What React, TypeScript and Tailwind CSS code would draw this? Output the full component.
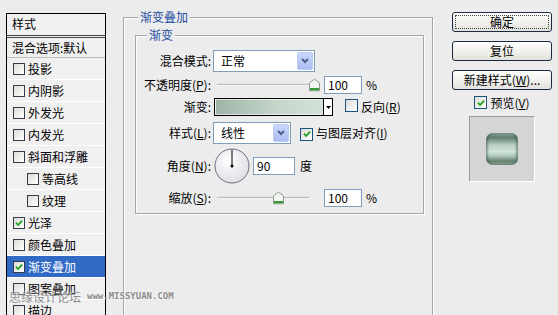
import React from "react";

const styles = [
  { label: "投影", on: false },
  { label: "内阴影", on: false },
  { label: "外发光", on: false },
  { label: "内发光", on: false },
  { label: "斜面和浮雕", on: false },
  { label: "等高线", on: false, sub: true },
  { label: "纹理", on: false, sub: true },
  { label: "光泽", on: true },
  { label: "颜色叠加", on: false },
  { label: "渐变叠加", on: true, active: true },
  { label: "图案叠加", on: false },
  { label: "描边", on: false },
];

function Check({ on, small }: { on?: boolean; small?: boolean }) {
  return (
    <span
      className={`inline-flex shrink-0 items-center justify-center border bg-gradient-to-br from-[#dcdcd7] to-white ${
        small ? "h-[12px] w-[12px] border-[#333c48]" : "h-[13px] w-[13px] border-[#1c5180]"
      }`}
    >
      {on && (
        <svg viewBox="0 0 9 9" className="h-[8px] w-[8px]">
          <path d="M1 4.2 L3.5 6.8 L8 1.8" stroke="#21a121" strokeWidth="2" fill="none" />
        </svg>
      )}
    </span>
  );
}

function Combo({ text, wide }: { text: string; wide?: boolean }) {
  return (
    <div className={`flex h-[22px] border border-[#7f9db9] bg-white ${wide ? "w-[102px]" : "w-[78px]"}`}>
      <span className="flex-1 pl-[7px] leading-[20px]">{text}</span>
      <span className="m-[1px] flex w-[16px] items-center justify-center rounded-[2px] border border-[#bccdf5] bg-gradient-to-b from-[#cbd9fd] to-[#abbdf2]">
        <svg viewBox="0 0 8 6" className="h-[6px] w-[8px]">
          <path d="M1 1 L4 4 L7 1" stroke="#4d6185" strokeWidth="2" fill="none" />
        </svg>
      </span>
    </div>
  );
}

function Slider({ pos, wide }: { pos: "end" | "mid"; wide?: boolean }) {
  return (
    <div className={`relative h-full ${wide ? "w-[100px]" : "w-[96px]"}`}>
      <div className="absolute left-0 right-[4px] top-1/2 h-[3px] -translate-y-1/2 rounded-full border-t border-[#9a9a9a] border-b border-b-white bg-[#e4e4e4]" />
      <svg
        viewBox="0 0 11 13"
        className={`absolute top-1/2 h-[13px] w-[11px] -translate-y-1/2 ${pos === "end" ? "left-[92px]" : "left-[56px]"}`}
      >
        <path d="M0.5 4.5 L5.5 0.5 L10.5 4.5 L10.5 12.5 L0.5 12.5 Z" fill="#f4f6f2" stroke="#8e9a90" />
        <rect x="1" y="9.5" width="9" height="2.5" fill="#3c9a3c" />
      </svg>
    </div>
  );
}

function Field({ value, w }: { value: string; w: string }) {
  return <div className={`h-[18px] border border-[#7f9db9] bg-white pl-[3px] leading-[16px] ${w}`}>{value}</div>;
}

function Label({ children }: { children: React.ReactNode }) {
  return <span className="w-[75px] shrink-0 text-right">{children}</span>;
}

function Button({ children, primary }: { children: React.ReactNode; primary?: boolean }) {
  return (
    <div className="h-[20px] w-full rounded-[3px] border border-[#1b2a40] bg-gradient-to-b from-white to-[#e2e2dc] p-[2px]">
      <div
        className={`flex h-full items-center justify-center leading-none ${
          primary ? "border border-dotted border-[#444]" : ""
        }`}
      >
        {children}
      </div>
    </div>
  );
}

export default function App() {
  return (
    <div className="relative flex h-[315px] w-[558px] overflow-hidden bg-[#ececec] font-['Noto_Sans_CJK_SC','Noto_Sans',sans-serif] text-[12px] text-black">
      {/* style list */}
      <div className="ml-[6px] mt-[13px] h-[320px] w-[100px] shrink-0 border border-black bg-[#f0f0f0]">
        <div className="flex h-[24px] items-center border-b-[3px] border-double border-[#444] pl-[5px] pb-[1px]">
          样式
        </div>
        <div className="flex h-[20px] items-center border-b border-[#bdbdbd] pl-[5px]">混合选项:默认</div>
        {styles.map((s) => (
          <div
            key={s.label}
            className={`flex h-[22px] items-center gap-[3px] border-b border-white ${s.sub ? "pl-[20px]" : "pl-[6px]"} ${
              s.active ? "bg-[#316ac5] text-white" : ""
            }`}
          >
            <Check on={s.on} small />
            <span>{s.label}</span>
          </div>
        ))}
      </div>

      {/* gradient overlay group */}
      <div className="relative ml-[17px] mt-[17px] h-[320px] w-[310px] shrink-0 border border-[#a6a6a6] shadow-[inset_1px_1px_0_#fff,1px_1px_0_#fff]">
        <span className="absolute -top-[9px] left-[14px] bg-[#ececec] px-[2px] leading-[16px] text-[#1f4ea0]">渐变叠加</span>

        <div className="relative ml-[11px] mt-[17px] h-[179px] w-[289px] border border-[#a6a6a6] shadow-[inset_1px_1px_0_#fff,1px_1px_0_#fff]">
          <span className="absolute -top-[9px] left-[11px] bg-[#ececec] px-[2px] leading-[16px] text-[#1f4ea0]">渐变</span>

          <div className="flex flex-col pt-[14px]">
            <div className="flex h-[22px] items-center">
              <Label>混合模式:</Label>
              <div className="ml-[2px]">
                <Combo text="正常" wide />
              </div>
            </div>

            <div className="mt-[3px] flex h-[20px] items-center">
              <Label>
                不透明度(<u>P</u>):
              </Label>
              <div className="ml-[6px] h-full">
                <Slider pos="end" wide />
              </div>
              <div className="ml-[7px]">
                <Field value="100" w="w-[38px]" />
              </div>
              <span className="ml-[4px]">%</span>
            </div>

            <div className="mt-[3px] flex h-[18px] items-center">
              <Label>渐变:</Label>
              <div className="ml-[3px] flex h-[18px] w-[119px] border border-black">
                <div className="flex-1 border border-white/60 bg-[linear-gradient(to_right,#9db4a6,#c4d5ca_55%,#d3e2d8)]" />
                <div className="flex w-[9px] items-center justify-center border-l border-black bg-white">
                  <svg viewBox="0 0 5 3" className="h-[3px] w-[5px]">
                    <path d="M0 0 L5 0 L2.5 3 Z" fill="#000" />
                  </svg>
                </div>
              </div>
              <span className="ml-[12px]">
                <Check />
              </span>
              <span className="ml-[3px]">
                反向(<u>R</u>)
              </span>
            </div>

            <div className="mt-[6px] flex h-[22px] items-center">
              <Label>
                样式(<u>L</u>):
              </Label>
              <div className="ml-[2px]">
                <Combo text="线性" />
              </div>
              <span className="ml-[9px]">
                <Check on />
              </span>
              <span className="ml-[3px]">
                与图层对齐(<u>I</u>)
              </span>
            </div>

            <div className="mt-[4px] flex h-[36px] items-center">
              <Label>
                角度(<u>N</u>):
              </Label>
              <svg viewBox="0 0 36 36" className="ml-[3px] h-[36px] w-[36px]">
                <defs>
                  <radialGradient id="dial" cx="40%" cy="35%" r="70%">
                    <stop offset="0%" stopColor="#ffffff" />
                    <stop offset="100%" stopColor="#dcdce4" />
                  </radialGradient>
                </defs>
                <circle cx="18" cy="18" r="17" fill="url(#dial)" stroke="#6f7080" strokeWidth="1" />
                <line x1="18" y1="18" x2="18" y2="1.5" stroke="#000" strokeWidth="1" />
                <circle cx="18" cy="18" r="1.5" fill="#000" />
              </svg>
              <div className="ml-[3px]">
                <Field value="90" w="w-[42px]" />
              </div>
              <span className="ml-[5px]">度</span>
            </div>

            <div className="mt-[5px] flex h-[18px] items-center">
              <Label>
                缩放(<u>S</u>):
              </Label>
              <div className="ml-[6px] h-full">
                <Slider pos="mid" />
              </div>
              <div className="ml-[11px]">
                <Field value="100" w="w-[38px]" />
              </div>
              <span className="ml-[4px]">%</span>
            </div>
          </div>
        </div>
      </div>

      {/* buttons */}
      <div className="ml-[19px] mt-[12px] flex w-[100px] shrink-0 flex-col items-center">
        <Button primary>确定</Button>
        <div className="mt-[9px] w-full">
          <Button>复位</Button>
        </div>
        <div className="mt-[9px] w-full">
          <Button>
            新建样式(<u>W</u>)...
          </Button>
        </div>
        <div className="mt-[6px] flex h-[13px] items-center gap-[3px]">
          <Check on />
          <span>
            预览(<u>V</u>)
          </span>
        </div>
        <div className="mt-[7px] flex h-[66px] w-[66px] items-center justify-center border border-[#9c9c9c] border-b-white border-r-white bg-[#d5d5d5]">
          <div className="h-[32px] w-[32px] rounded-[7px] bg-[linear-gradient(to_bottom,#8fa79a_0%,#5f7d6f_14%,#b9d0c4_38%,#d2e4da_58%,#b2c9bd_72%,#61806f_88%,#8ea798_100%)] shadow-[inset_2px_0_2px_rgba(60,90,75,0.5),inset_-2px_0_2px_rgba(60,90,75,0.5)]" />
        </div>
      </div>

      {/* watermark */}
      <div className="absolute left-[9px] top-[288px] flex items-center text-[#8d8d8d] [text-shadow:0_0_2px_#fff]">
        <span className="text-[12px]">思缘设计论坛</span>
        <span className="ml-[6px] font-['DejaVu_Sans_Mono',monospace] text-[9px] font-bold">www.MISSYUAN.COM</span>
      </div>
    </div>
  );
}
